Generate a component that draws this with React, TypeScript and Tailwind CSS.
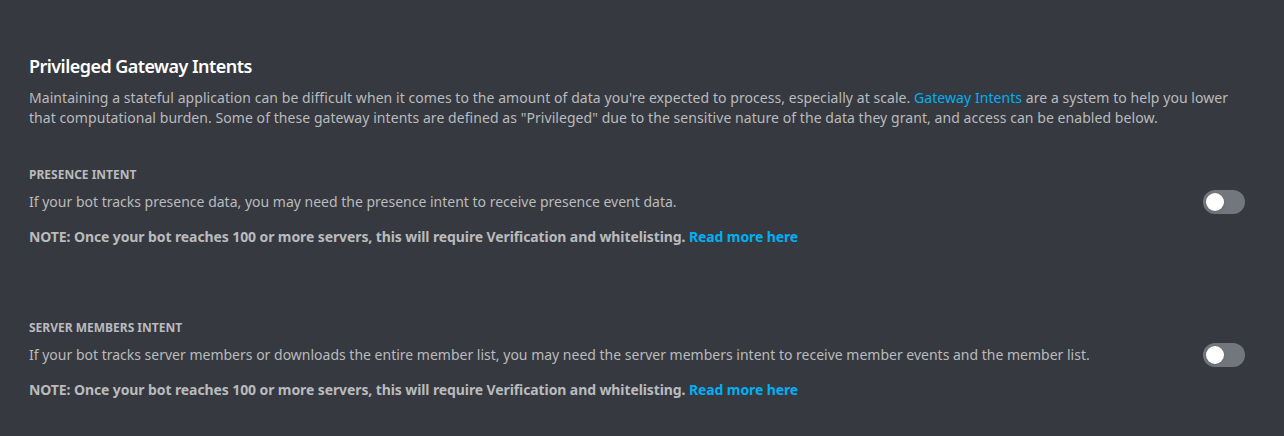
import React, { useState } from 'react';

const Toggle: React.FC<{ on: boolean; onChange: () => void }> = ({ on, onChange }) => (
  <button
    onClick={onChange}
    className={`relative w-[42px] h-[24px] rounded-full shrink-0 ${on ? 'bg-[#43b581]' : 'bg-[#72767d]'}`}
  >
    <span
      className={`absolute top-[3px] w-[18px] h-[18px] rounded-full bg-white shadow ${on ? 'left-[21px]' : 'left-[3px]'}`}
    />
  </button>
);

const Intent: React.FC<{ title: string; desc: string }> = ({ title, desc }) => {
  const [on, setOn] = useState(false);
  return (
    <div>
      <h5 className="text-[12px] leading-[16px] font-bold uppercase text-[#b9bbbe] mb-[7px]">{title}</h5>
      <div className="flex items-center justify-between gap-4">
        <p className="text-[14px] leading-[20px] text-[#b9bbbe]">{desc}</p>
        <Toggle on={on} onChange={() => setOn(!on)} />
      </div>
      <p className="mt-[13px] text-[14px] leading-[20px] font-bold tracking-[-0.1px] text-[#b9bbbe]">
        NOTE: Once your bot reaches 100 or more servers, this will require Verification and whitelisting.{' '}
        <a className="text-[#00b0f4] cursor-pointer">Read more here</a>
      </p>
    </div>
  );
};

export default function App() {
  return (
    <div
      className="w-full min-h-[436px] bg-[#36393f] pl-[29px] pr-[39px] pt-[54px]"
      style={{ fontFamily: '"Noto Sans", "Open Sans", sans-serif' }}
    >
      <h2 className="text-[18px] leading-[24px] font-semibold tracking-[-0.55px] text-white mb-[10px]">
        Privileged Gateway Intents
      </h2>
      <p className="text-[14px] leading-[20px] tracking-[0.06px] text-[#b9bbbe] pr-[8px]">
        Maintaining a stateful application can be difficult when it comes to the amount of data you're expected to
        process, especially at scale. <a className="text-[#00b0f4] cursor-pointer">Gateway Intents</a> are a system to
        help you lower that computational burden. Some of these gateway intents are defined as "Privileged" due to the
        sensitive nature of the data they grant, and access can be enabled below.
      </p>
      <div className="mt-[39px] flex flex-col gap-[73px]">
        <Intent
          title="Presence Intent"
          desc="If your bot tracks presence data, you may need the presence intent to receive presence event data."
        />
        <Intent
          title="Server Members Intent"
          desc="If your bot tracks server members or downloads the entire member list, you may need the server members intent to receive member events and the member list."
        />
      </div>
    </div>
  );
}
